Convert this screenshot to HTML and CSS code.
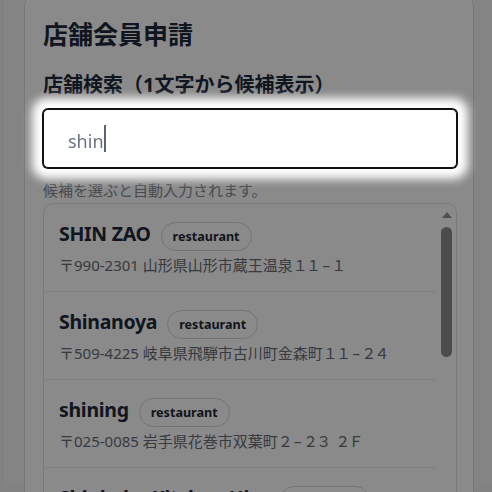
FILE: index.html
```html
<!DOCTYPE html>
<html lang="ja">
<head>
<meta charset="utf-8">
<title>店舗会員申請</title>
<link rel="stylesheet" href="styles.css">
</head>
<body>
<div class="page">
  <div class="shell">
    <section class="card">
      <h1 class="title">店舗会員申請</h1>
      <div class="label">店舗検索（1文字から候補表示）</div>
      <div class="field"><span class="value">shin</span><span class="caret"></span></div>
      <p class="hint">候補を選ぶと自動入力されます。</p>
      <div class="list">
        <div class="rows">
          <div class="row">
            <div class="row-head"><span class="name">SHIN ZAO</span><span class="badge">restaurant</span></div>
            <div class="addr">〒990-2301 山形県山形市蔵王温泉<span class="fw">１１<span class="dash">–</span>１</span></div>
          </div>
          <div class="row">
            <div class="row-head"><span class="name">Shinanoya</span><span class="badge">restaurant</span></div>
            <div class="addr">〒509-4225 岐阜県飛騨市古川町金森町<span class="fw">１１<span class="dash">–</span>２４</span></div>
          </div>
          <div class="row">
            <div class="row-head"><span class="name">shining</span><span class="badge">restaurant</span></div>
            <div class="addr">〒025-0085 岩手県花巻市双葉町<span class="fw">２<span class="dash">–</span>２３&ensp;２Ｆ</span></div>
          </div>
          <div class="row">
            <div class="row-head"><span class="name">Shinkaku Kitchen Hiro</span><span class="badge">restaurant</span></div>
            <div class="addr">〒100-0005 東京都千代田区丸の内<span class="fw">１<span class="dash">–</span>１</span></div>
          </div>
        </div>
        <div class="scroll">
          <span class="arrow"></span>
          <span class="thumb"></span>
        </div>
      </div>
    </section>
  </div>
</div>
<div class="overlay"></div>
</body>
</html>
```
FILE: styles.css
```css
html, body {
  margin: 0;
  height: 100%;
  overflow: hidden;
}
body {
  background: #f0f0f0;
  font-family: "Noto Sans", "Noto Sans CJK JP", sans-serif;
  color: #1e293b;
}
.page {
  padding-left: 5px;
  height: 100%;
}
.shell {
  height: 100%;
  border-left: 1px solid #fcfcfc;
  background: #f4f4f4;
  padding-left: 18px;
}
.card {
  box-sizing: border-box;
  width: 450px;
  margin-top: -6px;
  background: #fff;
  border: 1px solid #dcdcdc;
  border-radius: 12px;
  padding: 23px 16px 0 18px;
}
.title {
  margin: 0;
  font-size: 25px;
  line-height: 32px;
  font-weight: 700;
  color: #1e293b;
}
.label {
  margin: 21px 0 10px;
  font-size: 20px;
  line-height: 28px;
  font-weight: 700;
  color: #1e293b;
}
.field {
  position: relative;
  z-index: 2;
  box-sizing: border-box;
  height: 59px;
  display: flex;
  align-items: center;
  padding-left: 24px;
  background: #fff;
  border: 1px solid #111;
  border-radius: 5px;
  box-shadow: 0 0 0 1px #111, 0 0 10px 11px #fff;
  font-size: 18px;
  color: #6b7280;
}
.value {
  margin-top: 4px;
  line-height: 24px;
}
.caret {
  width: 2px;
  height: 27px;
  background: #5b6474;
}
.hint {
  margin: 11px 0 2px;
  font-size: 15px;
  line-height: 22px;
  color: #858b94;
}
.list {
  display: flex;
  height: 420px;
  overflow: hidden;
  border: 1px solid #e2e2e2;
  border-radius: 10px;
}
.rows {
  flex: 1;
  min-width: 0;
}
.row {
  padding: 16px 15px 15px;
  border-bottom: 1px solid #ececec;
}
.row-head {
  display: flex;
  align-items: baseline;
  gap: 10px;
}
.name {
  font-size: 19.5px;
  line-height: 27px;
  font-weight: 700;
  letter-spacing: -0.3px;
  color: #1e293b;
  white-space: nowrap;
}
.badge {
  font-size: 12.6px;
  line-height: 17px;
  font-weight: 700;
  padding: 5px 11px;
  border: 1px solid #d6d6d6;
  border-radius: 999px;
  color: #1f2937;
}
.addr {
  margin-top: 3px;
  font-size: 15px;
  line-height: 22px;
  color: #666c75;
  white-space: nowrap;
}
.fw {
  letter-spacing: -1.7px;
}
.dash {
  margin: 0 3px;
}
.scroll {
  width: 19px;
  display: flex;
  flex-direction: column;
  align-items: center;
  padding-top: 8px;
}
.arrow {
  width: 0;
  height: 0;
  border-left: 5px solid transparent;
  border-right: 5px solid transparent;
  border-bottom: 6px solid #949494;
}
.thumb {
  margin-top: 9px;
  width: 11px;
  height: 130px;
  border-radius: 6px;
  background: #8c8c8c;
}
.overlay {
  position: fixed;
  inset: 0;
  z-index: 1;
  background: rgba(0, 0, 0, 0.46);
}
```
